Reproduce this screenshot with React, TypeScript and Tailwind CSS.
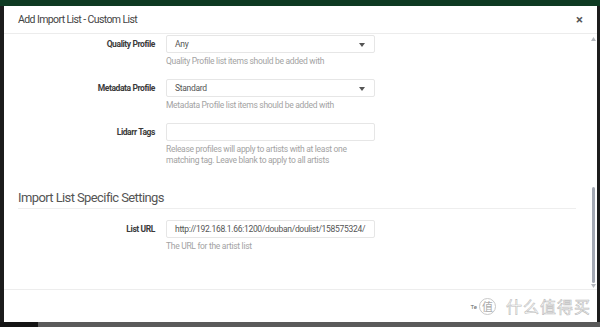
import React from "react";

const Caret = () => (
  <svg width="6" height="4" viewBox="0 0 6 4" className="absolute right-[9px] top-[7px]">
    <path d="M0 0 L6 0 L3 4 Z" fill="#555" />
  </svg>
);

function Row({
  label,
  value,
  select,
  help,
}: {
  label: string;
  value?: string;
  select?: boolean;
  help: React.ReactNode;
}) {
  return (
    <div className="flex">
      <div className="w-[151px] h-[18px] flex items-center justify-end text-[8.5px] tracking-[-0.4px] font-bold text-[#3a3a3a]">
        {label}
      </div>
      <div className="ml-[11px] w-[209px]">
        <div className="relative h-[18px] border border-[#e6e6e6] rounded-[2px] bg-white flex items-center pl-[8px] text-[8.5px] tracking-[-0.3px] text-[#555]">
          {value}
          {select && <Caret />}
        </div>
        <div className="mt-[3px] text-[8.5px] tracking-[-0.3px] leading-[11px] text-[#a3a3a3]">{help}</div>
      </div>
    </div>
  );
}

export default function App() {
  return (
    <div
      className="w-[600px] h-[327px] bg-[#1c1c1c] flex flex-col overflow-hidden"
      style={{ fontFamily: "Roboto, 'Liberation Sans', sans-serif" }}
    >
      <div className="h-[6px] bg-[#0e3a22] shrink-0" />
      <div className="flex flex-1 min-h-0 pl-[4px] pr-[3px] bg-[#1c1c1c]">
        <div className="flex-1 bg-white flex flex-col">
          <div className="h-[28px] shrink-0 border-b border-[#ececec] flex items-center justify-between pl-[14px] pr-[14px]">
            <span className="text-[10.5px] tracking-[-0.6px] text-[#444] pt-[1px]">Add Import List - Custom List</span>
            <span className="text-[13px] font-bold text-[#555] leading-none">×</span>
          </div>
          <div className="flex flex-1 min-h-0">
            <div className="flex-1 pt-[1px]">
              <Row label="Quality Profile" value="Any" select help="Quality Profile list items should be added with" />
              <div className="h-[12px]" />
              <Row label="Metadata Profile" value="Standard" select help="Metadata Profile list items should be added with" />
              <div className="h-[12px]" />
              <Row
                label="Lidarr Tags"
                help={
                  <>
                    Release profiles will apply to artists with at least one
                    <br />
                    matching tag. Leave blank to apply to all artists
                  </>
                }
              />
              <div className="mt-[24px] ml-[14px] mr-[13px] border-b border-[#eeeeee] pb-[2px] text-[13px] tracking-[-0.6px] leading-[16px] text-[#555]">
                Import List Specific Settings
              </div>
              <div className="h-[11px]" />
              <Row label="List URL" value="http://192.168.1.66:1200/douban/doulist/158575324/" help="The URL for the artist list" />
            </div>
            <div className="w-[8px] flex flex-col items-center pt-[3px] pb-[1px]">
              <svg width="5" height="4" viewBox="0 0 5 4">
                <path d="M0 4 L5 4 L2.5 0 Z" fill="#b5b8be" />
              </svg>
              <div className="flex-1" />
              <div className="w-[3px] h-[96px] rounded-[2px] bg-[#a3a8b3]" />
              <svg width="5" height="4" viewBox="0 0 5 4" className="mt-[1px]">
                <path d="M0 0 L5 0 L2.5 4 Z" fill="#b5b8be" />
              </svg>
            </div>
          </div>
          <div className="h-[33px] shrink-0 border-t border-[#ededed] flex items-center justify-end pr-[6px] relative">
            <div className="flex items-center text-[6px] text-[#666]">
              <span className="mr-[2px]">Te</span>
              <span
                className="w-[17px] h-[17px] rounded-full border border-[#c8c8c8] flex items-center justify-center text-[11px] text-[#aaa]"
                style={{ fontFamily: "'Noto Sans CJK SC', sans-serif" }}
              >
                值
              </span>
              <span
                className="ml-[10px] text-[16px] tracking-[1px] text-white"
                style={{ fontFamily: "'Noto Sans CJK SC', sans-serif", WebkitTextStroke: "0.6px #bdbdbd" }}
              >
                什么值得买
              </span>
            </div>
          </div>
        </div>
      </div>
      <div className="h-[5px] shrink-0 flex">
        <div className="w-[38px] bg-[#141414]" />
        <div className="flex-1 bg-[#5a5a5a]" />
      </div>
    </div>
  );
}
